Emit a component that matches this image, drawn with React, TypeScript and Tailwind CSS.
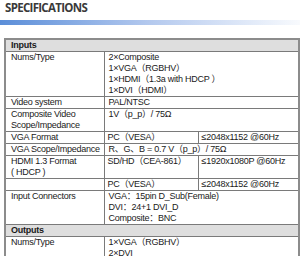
import React from "react";

type Row = {
  label: string[];
  value: string[];
  extra?: string[];
};

const inputs: Row[] = [
  {
    label: ["Nums/Type"],
    value: ["2×Composite", "1×VGA（RGBHV）", "1×HDMI（1.3a with HDCP  ）", "1×DVI（HDMI）"],
  },
  { label: ["Video system"], value: ["PAL/NTSC"] },
  { label: ["Composite Video", "Scope/Impedance"], value: ["1V（p_p）/ 75Ω", ""] },
  { label: ["VGA Format"], value: ["PC（VESA）"], extra: ["≤2048x1152 @60Hz"] },
  { label: ["VGA Scope/Impedance"], value: ["R、G、B = 0.7 V（p_p）/ 75Ω"] },
  { label: ["HDMI 1.3 Format", "( HDCP )"], value: ["SD/HD（CEA-861）", ""], extra: ["≤1920x1080P @60Hz", ""] },
  { label: [""], value: ["PC（VESA）"], extra: ["≤2048x1152 @60Hz"] },
  {
    label: ["Input Connectors", "", ""],
    value: ["VGA：15pin D_Sub(Female)", "DVI：24+1 DVI_D", "Composite：BNC"],
  },
];

const outputs: Row[] = [{ label: ["Nums/Type", ""], value: ["1×VGA（RGBHV）", "2×DVI"] }];

function Lines({ lines }: { lines: string[] }) {
  return (
    <>
      {lines.map((l, i) => (
        <div key={i} className="h-[11px] whitespace-nowrap">
          {l}
        </div>
      ))}
    </>
  );
}

function Section({ title, rows }: { title: string; rows: Row[] }) {
  return (
    <>
      <tr>
        <td colSpan={3} className="border border-[#7a7a7a] bg-[#dedede] px-[5px] font-bold">
          <Lines lines={[title]} />
        </td>
      </tr>
      {rows.map((r, i) => (
        <tr key={i} className="align-top">
          <td className="border border-[#7a7a7a] pl-[5px] pr-1">
            <Lines lines={r.label} />
          </td>
          {r.extra ? (
            <>
              <td className="border border-[#7a7a7a] pl-[3px]">
                <Lines lines={r.value} />
              </td>
              <td className="border border-[#7a7a7a] pl-[3px]">
                <Lines lines={r.extra} />
              </td>
            </>
          ) : (
            <td colSpan={2} className="border border-[#7a7a7a] pl-[4px]">
              <Lines lines={r.value} />
            </td>
          )}
        </tr>
      ))}
    </>
  );
}

export default function App() {
  return (
    <div className="w-[300px] h-[256px] overflow-hidden bg-white font-['Liberation_Sans','Noto_Sans_CJK_SC',sans-serif] text-[#1a1a1a]">
      {/* Heading */}
      <h1 className="pl-[5px] h-[15px] leading-[15px] font-['Open_Sans',sans-serif] text-[11.5px] font-bold tracking-[-0.7px] text-[#3a3a3a]">
        SPECIFICATIONS
      </h1>
      <div className="mt-[5px] h-[5px] bg-linear-to-r from-[#5b8ed8] via-[#b4c9ee] to-[#f8fafd]" />

      {/* Spec table */}
      <table className="mt-[13px] ml-[4px] w-[294px] table-fixed border-collapse border-2 border-[#8c8c8c] text-[9px] leading-[11px] tracking-[-0.25px]">
        <colgroup>
          <col className="w-[99px]" />
          <col className="w-[94px]" />
          <col className="w-[101px]" />
        </colgroup>
        <tbody>
          <Section title="Inputs" rows={inputs} />
          <Section title="Outputs" rows={outputs} />
        </tbody>
      </table>
    </div>
  );
}
